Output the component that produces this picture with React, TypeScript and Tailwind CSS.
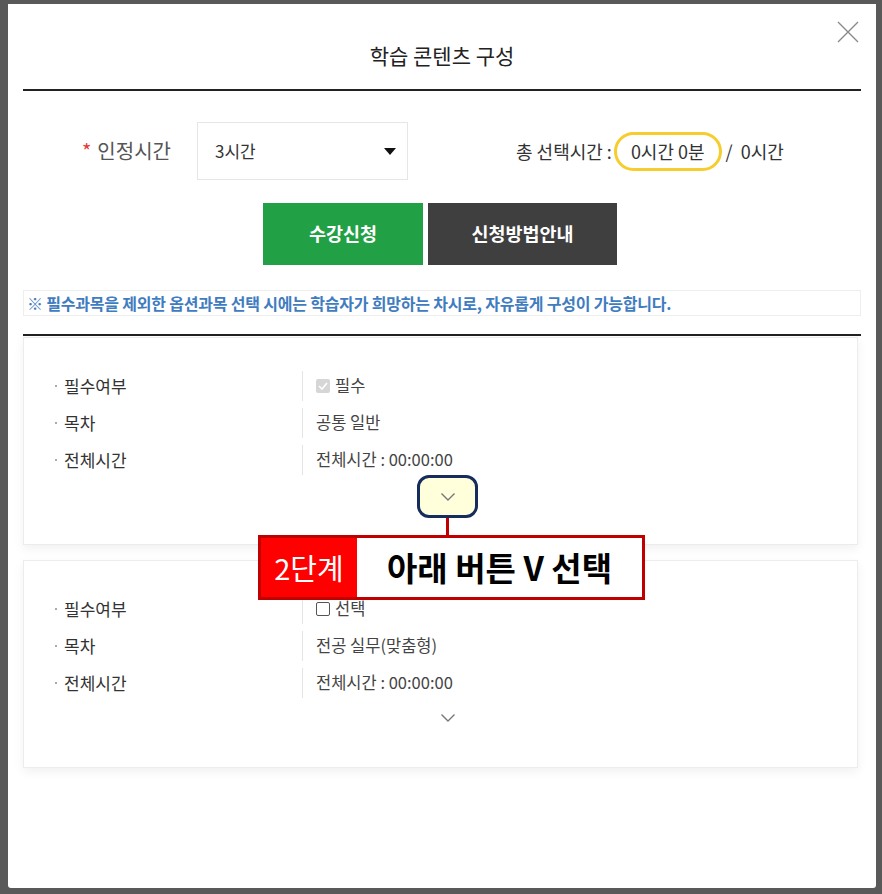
const font = { fontFamily: '"Noto Sans CJK KR", "Noto Sans", sans-serif' };

interface Row {
  label: string;
  value: React.ReactNode;
}

function Chevron() {
  return (
    <svg width="16" height="10" viewBox="0 0 16 10" fill="none">
      <path d="M1.5 1.5L8 8L14.5 1.5" stroke="#777" strokeWidth="1.4" />
    </svg>
  );
}

function CourseCard({ rows }: { rows: Row[] }) {
  return (
    <div className="h-[208px] bg-white border border-[#ececec] shadow-[0_4px_10px_rgba(0,0,0,0.06)] pt-[29px]">
      {rows.map((r) => (
        <div key={r.label} className="flex items-center h-[37px]">
          <div className="w-[278px] flex items-center pl-[31px] text-[17px] text-[#333]">
            <span className="w-[2px] h-[2px] bg-[#aaa] mr-[7px]" />
            {r.label}
          </div>
          <div className="h-[30px] border-l border-[#e4e4e4] pl-[13px] flex items-center text-[16.5px] text-[#444]">
            {r.value}
          </div>
        </div>
      ))}
      <div className="flex justify-center mt-[12px] pl-[14px]">
        <Chevron />
      </div>
    </div>
  );
}

export default function App() {
  return (
    <div className="w-[882px] h-[894px] bg-[#595959] pl-[8px] pt-[4px]" style={font}>
      <div className="relative w-[868px] h-[884px] bg-white rounded-b-[3px]">
        {/* close */}
        <svg className="absolute left-[829px] top-[17px]" width="22" height="22" viewBox="0 0 22 22">
          <path d="M1 1L21 21M21 1L1 21" stroke="#8a8a8a" strokeWidth="1.4" />
        </svg>

        {/* header */}
        <div className="h-[85px] pt-[19px] flex items-center justify-center text-[21px] text-[#222]">
          학습 콘텐츠 구성
        </div>
        <div className="mx-[15px] border-t-2 border-[#222]" />

        {/* time row */}
        <div className="flex items-center mt-[31px] pl-[74px]">
          <div className="w-[115px] text-[20px] text-[#555] flex items-center">
            <span className="text-[#e53935] mr-[6px]">*</span>인정시간
          </div>
          <div className="w-[211px] h-[58px] border border-[#e6e6e6] flex items-center justify-between pl-[17px] pr-[11px] text-[17px] text-[#333]">
            <span>3시간</span>
            <svg width="12" height="7" viewBox="0 0 12 7">
              <path d="M0 0H12L6 7Z" fill="#111" />
            </svg>
          </div>
          <div className="ml-[108px] flex items-center text-[18px] text-[#333]">
            <span>총 선택시간 :</span>
            <span className="ml-[2px] px-[14px] h-[39px] flex items-center rounded-full border-[3px] border-[#f6cd2c]">
              0시간 0분
            </span>
            <span className="ml-[4px]">/</span>
            <span className="ml-[8px]">0시간</span>
          </div>
        </div>

        {/* buttons */}
        <div className="flex justify-center gap-[5px] mt-[23px] pr-[4px]">
          <button className="w-[160px] h-[62px] bg-[#22a045] text-white font-bold text-[18.5px]">수강신청</button>
          <button className="w-[189px] h-[62px] bg-[#3f3f3f] text-white font-bold text-[18.5px]">신청방법안내</button>
        </div>

        {/* notice */}
        <div className="mx-[15px] mt-[25px] h-[26px] border border-[#eeeeee] flex items-center pl-[3px] text-[16px] font-bold text-[#3f7cc0] tracking-[-0.2px]">
          ※ 필수과목을 제외한 옵션과목 선택 시에는 학습자가 희망하는 차시로, 자유롭게 구성이 가능합니다.
        </div>
        <div className="mx-[15px] mt-[18px] border-t-2 border-[#222]" />

        {/* cards */}
        <div className="ml-[15px] mr-[18px] mt-[1px] flex flex-col gap-[15px]">
          <CourseCard
            rows={[
              {
                label: "필수여부",
                value: (
                  <>
                    <span className="w-[14px] h-[14px] rounded-[2px] bg-[#d6d6d6] flex items-center justify-center mr-[5px]">
                      <svg width="10" height="8" viewBox="0 0 10 8">
                        <path d="M1 4L4 7L9 1" stroke="#fff" strokeWidth="1.6" fill="none" />
                      </svg>
                    </span>
                    필수
                  </>
                ),
              },
              { label: "목차", value: "공통 일반" },
              { label: "전체시간", value: "전체시간 : 00:00:00" },
            ]}
          />
          <CourseCard
            rows={[
              {
                label: "필수여부",
                value: (
                  <>
                    <span className="w-[14px] h-[14px] rounded-[2px] border border-[#555] mr-[5px]" />
                    선택
                  </>
                ),
              },
              { label: "목차", value: "전공 실무(맞춤형)" },
              { label: "전체시간", value: "전체시간 : 00:00:00" },
            ]}
          />
        </div>

        {/* annotation */}
        <div className="absolute left-[409px] top-[471px] w-[61px] h-[43px] rounded-[12px] border-[3px] border-[#152c5c] bg-[#ffffdc] flex items-center justify-center">
          <Chevron />
        </div>
        <div className="absolute left-[438px] top-[514px] w-[3px] h-[18px] bg-[#c00000]" />
        <div className="absolute left-[250px] top-[531px] w-[387px] h-[65px] border-[3px] border-[#c00000] bg-white flex">
          <div className="w-[96px] bg-[#ff0000] flex items-center justify-center text-white text-[29px]">2단계</div>
          <div className="flex-1 flex items-center justify-center text-[33px] font-bold text-black">아래 버튼 V 선택</div>
        </div>
      </div>
    </div>
  );
}
